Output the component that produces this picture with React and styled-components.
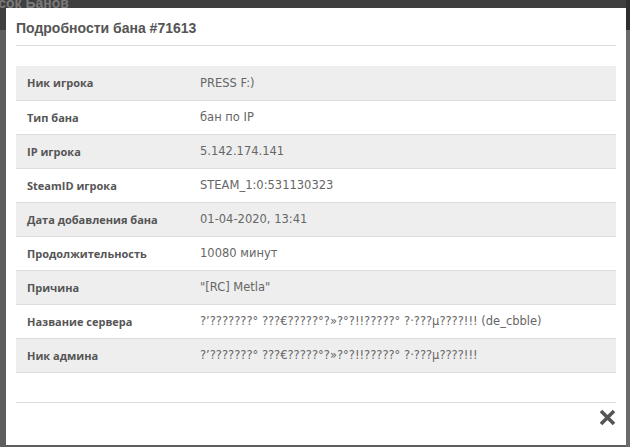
import React from "react";
import styled, { createGlobalStyle } from "styled-components";

const GlobalStyle = createGlobalStyle`
  html, body { margin: 0; padding: 0; }
  body {
    width: 630px;
    height: 447px;
    overflow: hidden;
    background: #5e5e5e;
    font-family: "DejaVu Sans", Verdana, sans-serif;
  }
`;

const rows = [
  ["Ник игрока", "PRESS F:)"],
  ["Тип бана", "бан по IP"],
  ["IP игрока", "5.142.174.141"],
  ["SteamID игрока", "STEAM_1:0:531130323"],
  ["Дата добавления бана", "01-04-2020, 13:41"],
  ["Продолжительность", "10080 минут"],
  ["Причина", "\"[RC] Metla\""],
  ["Название сервера", "?’???????° ???€?????°?»?°?!!?????° ?·???µ????!!! (de_cbble)"],
  ["Ник админа", "?’???????° ???€?????°?»?°?!!?????° ?·???µ????!!!"],
];

function App() {
  return (
    <>
      <GlobalStyle />
      <Page>
        <Content>
          <TopBar>
            <TopTitle>Список Банов</TopTitle>
          </TopBar>
          <Scrollbar />
        </Content>
        <Modal>
          <Header>
            <Title>Подробности бана #71613</Title>
          </Header>
          <Body>
            <Table>
              <tbody>
                {rows.map(([label, value], i) => (
                  <Row key={label} $odd={i % 2 === 0}>
                    <Label>{label}</Label>
                    <Value>{value}</Value>
                  </Row>
                ))}
              </tbody>
            </Table>
          </Body>
          <Footer>
            <Close aria-label="close">
              <svg width="17" height="17" viewBox="0 0 17 17">
                <path d="M2 2 L15 15 M15 2 L2 15" stroke="#555" strokeWidth="3.6" strokeLinecap="butt" />
              </svg>
            </Close>
          </Footer>
        </Modal>
      </Page>
    </>
  );
}

const Page = styled.div`
  position: relative;
  width: 630px;
  height: 447px;
`;

const Content = styled.div`
  position: relative;
  height: 100%;
  display: flex;
  flex-direction: column;
`;

const TopBar = styled.div`
  height: 30px;
  background: #3f3f3f;
  overflow: hidden;
  display: flex;
  align-items: flex-end;
`;

const TopTitle = styled.div`
  margin-left: -29px;
  margin-bottom: 19px;
  font-family: "Liberation Sans", Arial, sans-serif;
  font-weight: bold;
  font-size: 14px;
  color: #7a7a7a;
  line-height: 16px;
`;

const Scrollbar = styled.div`
  position: absolute;
  right: 0;
  top: 0;
  width: 4px;
  height: 100%;
  background: linear-gradient(#2f2f2f 0, #2f2f2f 30px, #6a6a6a 30px);
`;

const Modal = styled.div`
  position: absolute;
  left: 6px;
  top: 8px;
  width: 620px;
  height: 437px;
  background: #fff;
  display: flex;
  flex-direction: column;
  padding: 0 10px;
  box-sizing: border-box;
`;

const Header = styled.div`
  height: 37px;
  border-bottom: 1px solid #ddd;
  display: flex;
  align-items: center;
`;

const Title = styled.h4`
  margin: 0;
  margin-top: 3px;
  font-family: "Liberation Sans", Arial, sans-serif;
  font-weight: bold;
  font-size: 14px;
  color: #555;
`;

const Body = styled.div`
  padding-top: 20px;
  height: 336px;
  border-bottom: 1px solid #ddd;
`;

const Table = styled.table`
  width: 100%;
  border-collapse: collapse;
  font-size: 11.5px;
`;

const Row = styled.tr`
  height: 34px;
  background: ${(p) => (p.$odd ? "#eee" : "#fff")};
  border-bottom: 1px solid #ddd;
`;

const Label = styled.td`
  width: 173px;
  padding: 0 0 0 11px;
  font-family: "Open Sans", "DejaVu Sans", sans-serif;
  font-weight: bold;
  font-size: 11px;
  color: #555;
`;

const Value = styled.td`
  padding: 0;
  color: #666;
`;

const Footer = styled.div`
  flex: 1;
  display: flex;
  justify-content: flex-end;
  align-items: center;
  padding-bottom: 14px;
`;

const Close = styled.div`
  width: 17px;
  height: 17px;
  display: flex;
`;

export default App;
